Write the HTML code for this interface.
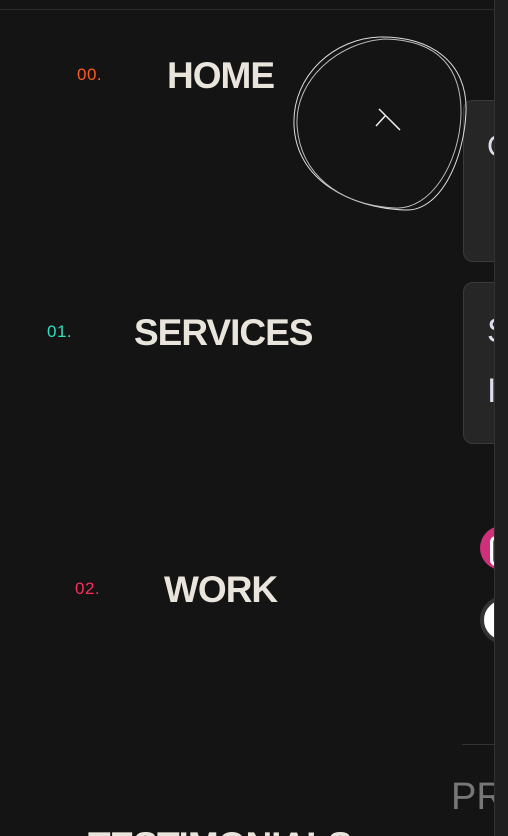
<!DOCTYPE html>
<html><head><style>
html,body{margin:0;padding:0;background:#141414;width:508px;height:836px;overflow:hidden;font-family:"Liberation Sans",sans-serif;}
#w{position:relative;width:508px;height:836px;overflow:hidden;}
.b{position:absolute;}
.t{position:absolute;color:#e9e5dd;font-weight:bold;font-size:37px;white-space:nowrap;letter-spacing:-1px;}
.n{position:absolute;font-size:17px;white-space:nowrap;letter-spacing:0.5px;}
</style></head><body><div id="w">
<div class="b" style="left:0;top:9px;width:494px;height:1px;background:#2e2e2e"></div>
<div class="b" style="left:463px;top:100px;width:40px;height:160px;background:#262626;border:1px solid #3a3a3a;border-radius:10px"></div>
<div class="b" style="left:463px;top:282px;width:40px;height:160px;background:#262626;border:1px solid #3a3a3a;border-radius:10px"></div>
<div class="b" style="left:487px;top:130px;color:#dde;font-size:30px">C</div>
<div class="b" style="left:487px;top:312px;color:#dde;font-size:34px">S</div>
<div class="b" style="left:487px;top:372px;color:#dde;font-size:34px">I</div>
<div class="b" style="left:480px;top:526px;width:44px;height:44px;border-radius:50%;background:#d0307a"></div>
<div class="b" style="left:490px;top:536px;width:18px;height:24px;border:3px solid #fff;border-radius:6px"></div>
<div class="b" style="left:480px;top:596px;width:40px;height:40px;border-radius:50%;background:#fff;border:4px solid #333"></div>
<div class="b" style="left:462px;top:744px;width:32px;height:1px;background:#333"></div>
<div class="b" style="left:451px;top:776px;color:#777;font-size:38px">PR</div>
<div class="b" style="left:494px;top:0;width:14px;height:836px;background:#1f1f1f;border-left:1px solid #333"></div>
<svg class="b" style="left:0;top:0" width="494" height="836">
<path d="M380 37 C430 36 468 62 466 112 C464 160 440 212 405 210 C350 208 296 180 294 125 C292 75 335 38 380 37Z" fill="none" stroke="#ddd" stroke-width="1"/>
<path d="M385 39 C440 40 462 70 461 115 C459 165 430 210 395 208 C340 205 300 175 297 125 C295 80 338 42 385 39Z" fill="none" stroke="#bbb" stroke-width="1"/>
<path d="M376 126 L386 115 M379 109 L400 130" stroke="#eee" stroke-width="1.5"/>
</svg>
<div class="n" style="left:77px;top:65px;color:#ff5a1f">00.</div>
<div class="t" style="left:167px;top:55px">HOME</div>
<div class="n" style="left:47px;top:322px;color:#2de0c0">01.</div>
<div class="t" style="left:134px;top:312px">SERVICES</div>
<div class="n" style="left:75px;top:579px;color:#ff2d5a">02.</div>
<div class="t" style="left:164px;top:569px">WORK</div>
<div class="t" style="left:88px;top:825px">TESTIMONIALS</div>
</div></body></html>
